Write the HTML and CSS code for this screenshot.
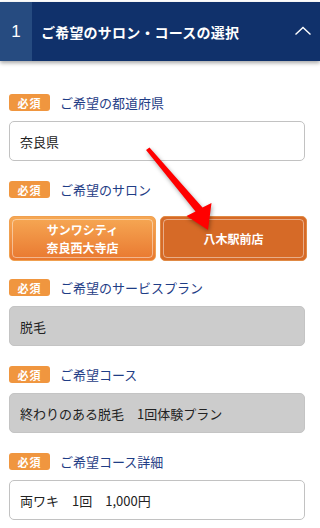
FILE: index.html
```html
<!DOCTYPE html>
<html lang="ja">
<head>
<meta charset="utf-8">
<title>ご希望のサロン・コースの選択</title>
<link rel="stylesheet" href="styles.css">
</head>
<body>
<div class="page">
  <div class="header">
    <div class="num">1</div>
    <div class="title">ご希望のサロン・コースの選択</div>
    <svg class="chev" width="18" height="10" viewBox="0 0 18 10"><polyline points="1.5,8.5 9,1.5 16.5,8.5" fill="none" stroke="#fff" stroke-width="1.4"/></svg>
  </div>
  <div class="form">
    <div class="field">
      <div class="label-row"><span class="badge">必須</span><span class="label">ご希望の都道府県</span></div>
      <div class="input">奈良県</div>
    </div>
    <div class="field field-salon">
      <div class="label-row"><span class="badge">必須</span><span class="label">ご希望のサロン</span></div>
      <div class="buttons">
        <div class="btn btn-light"><span class="line">サンワシティ</span><span class="line">奈良西大寺店</span></div>
        <div class="btn btn-active"><span class="line">八木駅前店</span></div>
      </div>
    </div>
    <div class="field">
      <div class="label-row"><span class="badge">必須</span><span class="label">ご希望のサービスプラン</span></div>
      <div class="input input-gray">脱毛</div>
    </div>
    <div class="field">
      <div class="label-row"><span class="badge">必須</span><span class="label">ご希望コース</span></div>
      <div class="input input-gray">終わりのある脱毛　1回体験プラン</div>
    </div>
    <div class="field">
      <div class="label-row"><span class="badge">必須</span><span class="label">ご希望コース詳細</span></div>
      <div class="input">両ワキ　1回　1,000円</div>
    </div>
  </div>
  <svg class="arrow" width="320" height="528" viewBox="0 0 320 528">
    <polygon points="146,148 149.5,145.5 202.5,205.6 211.5,201 208,228 186.5,214 195.5,209.4" fill="#ff0000"/>
  </svg>
</div>
</body>
</html>
```

FILE: styles.css
```css
html, body {
  margin: 0;
  padding: 0;
  background: #fff;
}
body {
  font-family: "Noto Sans CJK JP", "Noto Sans", "Liberation Sans", sans-serif;
  width: 320px;
  height: 528px;
  overflow: hidden;
}
.page {
  position: relative;
  width: 320px;
  height: 528px;
}
.header {
  margin-top: 2px;
  height: 59px;
  display: flex;
  align-items: center;
  background: #10316b;
  color: #fff;
  box-shadow: 0 2px 4px rgba(0, 0, 0, 0.35);
}
.num {
  width: 32px;
  height: 100%;
  background: #264b80;
  display: flex;
  align-items: center;
  justify-content: center;
  font-size: 17px;
  font-family: "Liberation Sans", "Noto Sans", sans-serif;
}
.title {
  flex: 1;
  padding-left: 9px;
  font-size: 14px;
  font-weight: bold;
  letter-spacing: 0.2px;
}
.chev {
  margin-right: 8px;
  margin-top: -2px;
}
.form {
  padding: 33px 15px 0 9px;
}
.field {
  margin-bottom: 20px;
}
.label-row {
  display: flex;
  align-items: center;
  gap: 10px;
  height: 17px;
  margin-bottom: 10px;
}
.badge {
  width: 41px;
  height: 17px;
  border-radius: 3px;
  background: #f0963f;
  color: #fff;
  font-size: 11px;
  font-weight: bold;
  display: flex;
  align-items: center;
  justify-content: center;
  letter-spacing: 1px;
}
.label {
  font-size: 13px;
  color: #1f3d86;
}
.input {
  box-sizing: border-box;
  height: 40px;
  border: 1px solid #c2c2c2;
  border-radius: 5px;
  padding-left: 10px;
  display: flex;
  align-items: center;
  font-size: 13px;
  color: #222;
  background: #fff;
}
.input-gray {
  background: #cccccc;
  border-color: #c4c4c4;
}
.field-salon {
  margin-bottom: 18px;
}
.field-salon .label-row {
  margin-bottom: 18px;
}
.buttons {
  display: grid;
  grid-template-columns: 1fr 1fr;
  gap: 4px;
  margin-right: -2px;
}
.btn {
  position: relative;
  box-sizing: border-box;
  height: 45px;
  border-radius: 5px;
  display: flex;
  flex-direction: column;
  align-items: center;
  justify-content: center;
  text-align: center;
  color: #fff;
  font-size: 12px;
  font-weight: bold;
}
.line {
  display: block;
  line-height: 18px;
}
.btn::after {
  content: "";
  position: absolute;
  inset: 2px;
  border: 1px solid rgba(255, 255, 255, 0.45);
  border-radius: 4px;
}
.btn-light {
  background: linear-gradient(#f6a854, #e97830);
  border: 1px solid #f0a050;
}
.btn-active {
  background: #d66a27;
  border: 1px solid #e08a45;
}
.arrow {
  position: absolute;
  left: 0;
  top: 0;
  pointer-events: none;
  filter: drop-shadow(1px 2px 2px rgba(0, 0, 0, 0.35));
}
```
